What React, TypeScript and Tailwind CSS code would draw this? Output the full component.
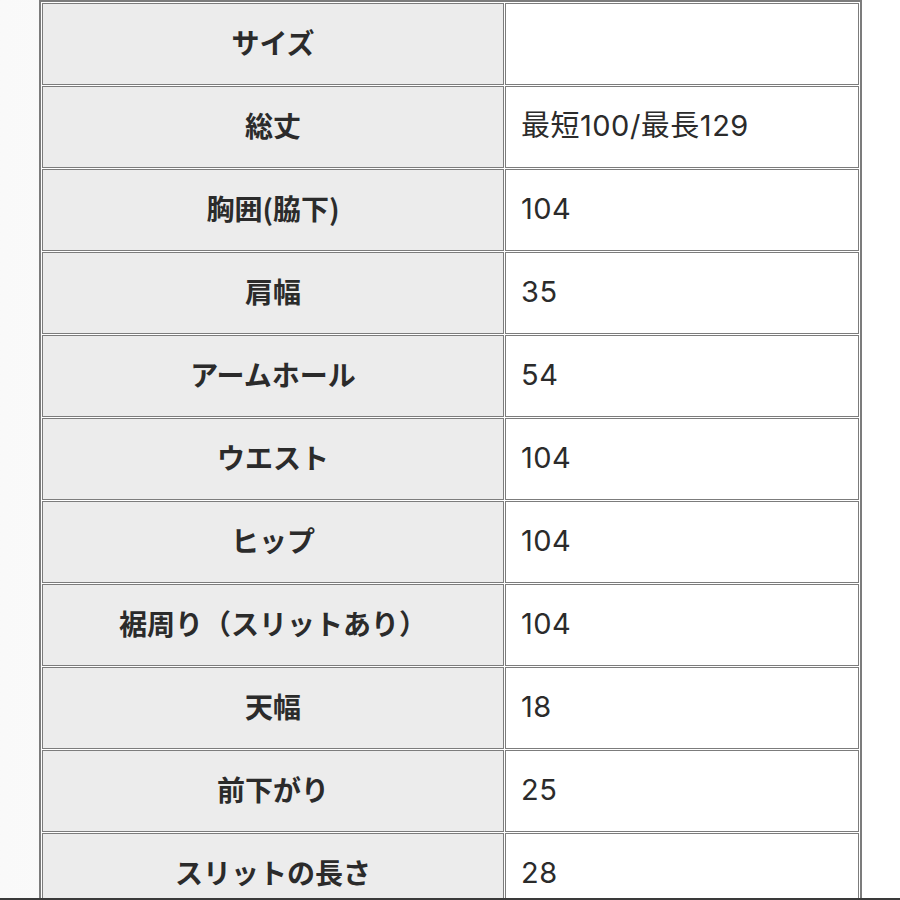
import React from "react";

const rows: [string, string][] = [
  ["サイズ", ""],
  ["総丈", "最短100/最長129"],
  ["胸囲(脇下)", "104"],
  ["肩幅", "35"],
  ["アームホール", "54"],
  ["ウエスト", "104"],
  ["ヒップ", "104"],
  ["裾周り（スリットあり）", "104"],
  ["天幅", "18"],
  ["前下がり", "25"],
  ["スリットの長さ", "28"],
];

export default function App() {
  return (
    <div
      className="h-[900px] w-[900px] overflow-hidden border-b-[2px] border-[#3a3a3a] bg-gradient-to-r from-[#f9f9f9] via-white to-white"
      style={{ fontFamily: '"Noto Sans CJK JP", "Noto Sans", sans-serif' }}
    >
      <div className="pl-[39px]">
        <table className="w-[823px] border-separate border-spacing-[1px] border-[2px] border-[#7c7c7c] bg-white text-[#2b2b2b]">
          <tbody>
            {rows.map(([k, v], i) => (
              <tr key={i} className="h-[82px]">
                <th className="w-[462px] border border-[#7c7c7c] bg-[#ececec] pb-[5px] text-center text-[28px] font-bold leading-none">
                  {k}
                </th>
                <td
                  className="border border-[#7c7c7c] bg-white pb-[4px] pl-[15px] text-left text-[29px] font-normal leading-none tracking-[0.5px]"
                  style={{ fontFamily: 'Inter, "Noto Sans CJK JP", sans-serif' }}
                >
                  {v}
                </td>
              </tr>
            ))}
          </tbody>
        </table>
      </div>
    </div>
  );
}
